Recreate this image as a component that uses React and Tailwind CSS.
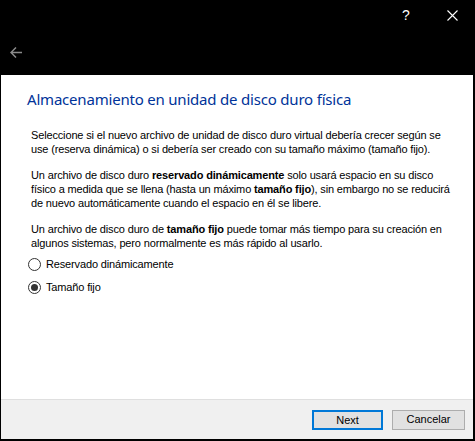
import React from "react";

const Radio = ({ checked, label }) => (
  <label className="flex items-center gap-[5px] h-[16px]">
    <span className="w-[13px] h-[13px] rounded-full border border-[#333333] bg-white flex items-center justify-center">
      {checked && <span className="w-[7px] h-[7px] rounded-full bg-[#333333]" />}
    </span>
    <span>{label}</span>
  </label>
);

const App = () => {
  return (
    <div
      className="w-[475px] h-[441px] bg-black flex flex-col text-black"
      style={{ fontFamily: "'Liberation Sans', Arial, sans-serif" }}
    >
      {/* title bar and back button */}
      <div className="h-[75px] flex flex-col">
        <div className="h-[30px] flex justify-end items-center text-white">
          <span className="w-[46px] text-center text-[14px]">?</span>
          <span className="w-[46px] flex justify-center">
            <svg width="11" height="11" viewBox="0 0 11 11">
              <path d="M0.5 0.5L10.5 10.5M10.5 0.5L0.5 10.5" stroke="white" strokeWidth="1.1" />
            </svg>
          </span>
        </div>
        <div className="h-[45px] flex items-center pl-[10px] pb-[1px]">
          <svg width="12" height="11" viewBox="0 0 12 11">
            <path d="M6 0.5L1 5.5L6 10.5M1 5.5H12" stroke="#8a8a8a" strokeWidth="1.5" fill="none" />
          </svg>
        </div>
      </div>

      {/* page body */}
      <div className="flex-1 bg-white ml-[1px] mr-[2px] flex flex-col">
        <div
          className="pl-[26px] pt-[13px] text-[15px] leading-[22px] tracking-[-0.2px] text-[#003399]"
          style={{ fontFamily: "'Noto Sans', sans-serif" }}
        >
          Almacenamiento en unidad de disco duro física
        </div>
        <div className="pl-[30px] pt-[18px] text-[11px] leading-[14px] tracking-[-0.15px] flex flex-col gap-[12px]">
          <p>
            Seleccione si el nuevo archivo de unidad de disco duro virtual debería crecer según se
            <br />
            use (reserva dinámica) o si debería ser creado con su tamaño máximo (tamaño fijo).
          </p>
          <p>
            Un archivo de disco duro <b>reservado dinámicamente</b> solo usará espacio en su disco
            <br />
            físico a medida que se llena (hasta un máximo <b>tamaño fijo</b>), sin embargo no se reducirá
            <br />
            de nuevo automáticamente cuando el espacio en él se libere.
          </p>
          <p>
            Un archivo de disco duro de <b>tamaño fijo</b> puede tomar más tiempo para su creación en
            <br />
            algunos sistemas, pero normalmente es más rápido al usarlo.
          </p>
        </div>
        <div className="pl-[27px] pt-[6px] text-[11px] tracking-[-0.15px] flex flex-col gap-[7px]">
          <Radio label="Reservado dinámicamente" />
          <Radio checked label="Tamaño fijo" />
        </div>
      </div>

      {/* footer buttons */}
      <div className="h-[40px] bg-[#f0f0f0] border-t border-[#dfdfdf] ml-[1px] mr-[2px] mb-[2px] flex items-center justify-end gap-[9px] pr-[8px] text-[11px]">
        <button className="w-[71px] h-[20px] bg-[#e1e1e1] border-2 border-[#0078d7]">Next</button>
        <button className="w-[73px] h-[20px] bg-[#e1e1e1] border border-[#adadad]">Cancelar</button>
      </div>
    </div>
  );
};

export default App;
